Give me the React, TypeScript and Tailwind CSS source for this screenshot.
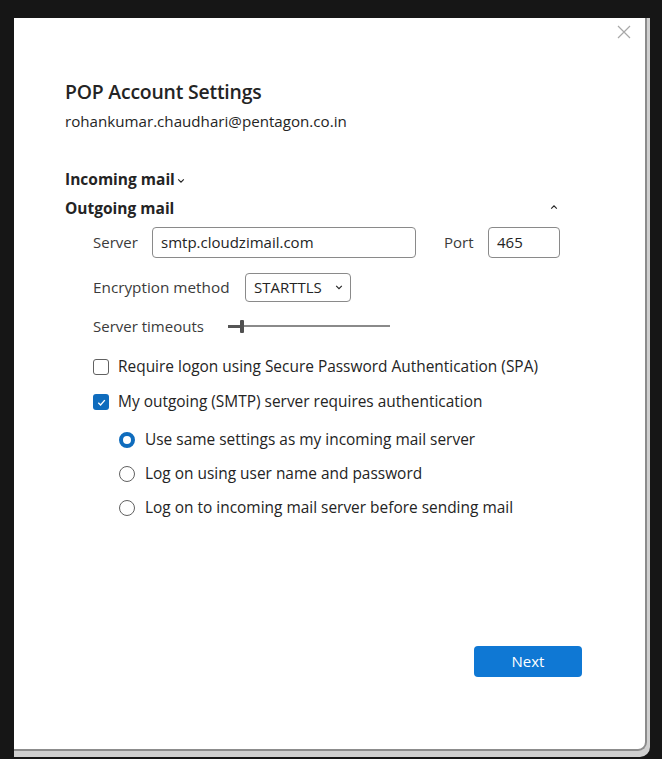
import React, { useState } from 'react';

const Chevron: React.FC<{ up?: boolean; className?: string }> = ({ up, className }) => (
  <svg viewBox="0 0 10 6" className={className} fill="none" stroke="currentColor" strokeWidth="1.4">
    {up ? <path d="M1.5 5 5 1.5 8.5 5" /> : <path d="M1.5 1 5 4.5 8.5 1" />}
  </svg>
);

const Radio: React.FC<{ checked?: boolean; label: string }> = ({ checked, label }) => (
  <div className="flex items-center h-[22px]">
    {checked ? (
      <span className="w-4 h-4 rounded-full border-[4.5px] border-[#0f6cbd] bg-white" />
    ) : (
      <span className="w-4 h-4 rounded-full border border-[#616161] bg-white" />
    )}
    <span className="ml-[10px] text-[15.45px]">{label}</span>
  </div>
);

const App: React.FC = () => {
  const [server] = useState('smtp.cloudzimail.com');
  const [port] = useState('465');

  return (
    <div
      className="w-[662px] h-[759px] bg-[#161616] pt-[18px] pl-[14px] text-[#242424]"
      style={{ fontFamily: '"Open Sans", "Noto Sans", sans-serif' }}
    >
      <div className="w-[636px] h-[739px] bg-[#cfcfcf] rounded-br-[10px] pr-[3px] pb-[6px]">
        <div className="w-full h-full bg-white border-r-2 border-b-2 border-[#8c8c8c] rounded-br-[9px] flex flex-col">
          {/* Title bar */}
          <div className="flex justify-end pt-[7px] pr-[14px]">
            <svg viewBox="0 0 14 14" className="w-[14px] h-[14px] text-[#a8a8a8]" fill="none" stroke="currentColor" strokeWidth="1.2">
              <path d="M1 1 13 13M13 1 1 13" />
            </svg>
          </div>

          <div className="flex flex-col pl-[51px] flex-1">
            <h1 className="mt-[39px] text-[19.4px] leading-[28px] font-semibold tracking-[-0.2px]">POP Account Settings</h1>
            <div className="mt-[4px] text-[15.15px] leading-[22px]">rohankumar.chaudhari@pentagon.co.in</div>

            <div className="mt-[36px] flex items-center text-[15.5px] leading-[22px] font-bold">
              <span>Incoming mail</span>
              <Chevron className="w-[8px] h-[6px] ml-[2px] mt-[3px]" />
            </div>
            <div className="mt-[7px] w-[493px] flex items-center justify-between text-[15.5px] leading-[22px] font-bold">
              <span>Outgoing mail</span>
              <Chevron up className="w-[8px] h-[6px] -mt-[2px]" />
            </div>

            <div className="pl-[28px] text-[15px] text-[#3b3b3b]">
              {/* Server / Port */}
              <div className="mt-[8px] flex items-center h-[31px]">
                <span className="w-[59px]">Server</span>
                <div className="w-[264px] h-[31px] border border-[#8a8a8a] rounded-[4px] flex items-center pl-[8px] text-[#242424]">
                  {server}
                </div>
                <span className="ml-[28px] w-[44px]">Port</span>
                <div className="w-[72px] h-[31px] border border-[#8a8a8a] rounded-[4px] flex items-center pl-[8px] text-[#242424]">
                  {port}
                </div>
              </div>

              {/* Encryption */}
              <div className="mt-[15px] flex items-center h-[29px]">
                <span className="w-[152px] text-[15.3px]">Encryption method</span>
                <div className="w-[106px] h-[29px] border border-[#8a8a8a] rounded-[4px] flex items-center justify-between pl-[8px] pr-[7px] text-[#242424]">
                  <span>STARTTLS</span>
                  <Chevron className="w-[8px] h-[5px]" />
                </div>
              </div>

              {/* Server timeouts */}
              <div className="mt-[14px] flex items-center h-[20px]">
                <span className="w-[135px]">Server timeouts</span>
                <div className="flex items-center">
                  <span className="w-[12px] h-[3px] bg-[#555]" />
                  <span className="w-[4px] h-[13px] bg-[#505050] rounded-[1px]" />
                  <span className="w-[146px] h-[2px] bg-[#8a8a8a]" />
                </div>
              </div>

              {/* Checkboxes */}
              <div className="mt-[20px] flex items-center h-[22px] text-[#242424] text-[15.45px]">
                <span className="w-4 h-4 rounded-[3px] border border-[#616161] bg-white" />
                <span className="ml-[9px]">Require logon using Secure Password Authentication (SPA)</span>
              </div>
              <div className="mt-[13px] flex items-center h-[22px] text-[#242424] text-[15.45px]">
                <span className="w-4 h-4 rounded-[3px] bg-[#0f6cbd] flex items-center justify-center">
                  <svg viewBox="0 0 12 12" className="w-[11px] h-[11px]" fill="none" stroke="white" strokeWidth="1.5">
                    <path d="M2.5 6.2 5 8.6 9.6 3.4" />
                  </svg>
                </span>
                <span className="ml-[9px]">My outgoing (SMTP) server requires authentication</span>
              </div>

              {/* Radios */}
              <div className="pl-[26px] text-[#242424]">
                <div className="mt-[16px]">
                  <Radio checked label="Use same settings as my incoming mail server" />
                </div>
                <div className="mt-[12px]">
                  <Radio label="Log on using user name and password" />
                </div>
                <div className="mt-[12px]">
                  <Radio label="Log on to incoming mail server before sending mail" />
                </div>
              </div>
            </div>

            <div className="flex-1" />
            <div className="flex pb-[72px]">
              <button className="ml-[409px] w-[108px] h-[31px] rounded-[4px] bg-[#0f78d4] text-white text-[15px] font-medium">
                Next
              </button>
            </div>
          </div>
        </div>
      </div>
    </div>
  );
};

export default App;
